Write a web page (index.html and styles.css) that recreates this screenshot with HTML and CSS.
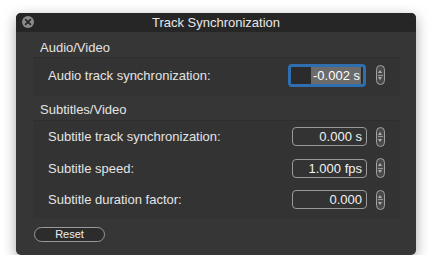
FILE: index.html
```html
<!DOCTYPE html>
<html lang="en">
<head>
  <meta charset="UTF-8" />
  <title>Track Synchronization</title>
  <link rel="stylesheet" href="styles.css">
</head>
<body>
  <div class="window">
    <div class="titlebar">
      <span class="close">
        <svg width="12" height="12" viewBox="0 0 12 12">
          <circle cx="6" cy="6" r="6" fill="#8a8a8a"/>
          <path d="M3.6 3.6 L8.4 8.4 M8.4 3.6 L3.6 8.4" stroke="#2a2a2a" stroke-width="1.8" stroke-linecap="round"/>
        </svg>
      </span>
      <span class="title">Track Synchronization</span>
    </div>
    <div class="content">
      <div class="section-title">Audio/Video</div>
      <div class="group group-audio">
        <div class="row">
          <span class="label">Audio track synchronization:</span>
          <div class="field focused"><span class="sel">-0.002 s</span></div>
          <span class="stepper"></span>
        </div>
      </div>
      <div class="section-title">Subtitles/Video</div>
      <div class="group">
        <div class="row">
          <span class="label">Subtitle track synchronization:</span>
          <div class="field">0.000 s</div>
          <span class="stepper"></span>
        </div>
        <div class="row">
          <span class="label">Subtitle speed:</span>
          <div class="field">1.000 fps</div>
          <span class="stepper"></span>
        </div>
        <div class="row">
          <span class="label">Subtitle duration factor:</span>
          <div class="field">0.000</div>
          <span class="stepper"></span>
        </div>
      </div>
      <button class="reset">Reset</button>
    </div>
  </div>
</body>
</html>
```

FILE: styles.css
```css
* {
  box-sizing: border-box;
  font-family: "Liberation Sans", Arial, sans-serif;
}
body {
  margin: 0;
  padding: 13px 0 0 16px;
  background: #fff;
}
.window {
  width: 400px;
  height: 242px;
  background: #363636;
  border-radius: 5px;
  box-shadow: 0 4px 14px rgba(0,0,0,0.35);
  overflow: hidden;
  color: #e4e4e4;
}
.titlebar {
  height: 19px;
  background: #262626;
  display: flex;
  align-items: center;
  justify-content: center;
  position: relative;
  font-size: 13px;
  color: #e8e8e8;
}
.close {
  position: absolute;
  left: 6px;
  top: 3px;
  height: 12px;
}
.close svg { display: block; }
.content {
  padding: 7px 16px 0 17px;
  font-size: 13px;
}
.section-title {
  padding-left: 7px;
  height: 17px;
  line-height: 17px;
}
.group {
  margin: 2px 0 0 0;
  padding: 0 0 3px 0;
  background: #333333;
  border-top: 1px solid #2e2e2e;
  border-radius: 3px;
}
.group-audio {
  margin-top: 1px;
  padding: 0 0 4px 0;
  margin-bottom: 5px;
}
.row {
  display: flex;
  align-items: center;
  height: 31.5px;
  padding-left: 15px;
}
.group-audio .row { height: 34px; }
.label { flex: 1; }
.field {
  width: 75px;
  height: 19px;
  border: 1px solid #9a9a9a;
  border-radius: 4px;
  text-align: right;
  padding: 0 4px;
  line-height: 17px;
  color: #f2f2f2;
  margin-right: 2px;
}
.field.focused {
  width: 78px;
  height: 23px;
  border: 3px solid #2f6fb0;
  border-radius: 4px;
  background: #2b2b2b;
  padding: 0 2px;
  line-height: 17px;
  margin-right: 3px;
}
.sel {
  background: #6b6b6b;
  color: #fff;
  display: inline-block;
  padding: 0 1px 0 2px;
}
.stepper {
  width: 9px;
  height: 20px;
  margin: 0 15px 0 7px;
  border: 1px solid #a0a0a0;
  border-radius: 5px;
  position: relative;
  background:
    linear-gradient(#9a9a9a, #9a9a9a) center 50% / 5px 1px no-repeat,
    #4a4a4a;
}
.stepper::before, .stepper::after {
  content: "";
  position: absolute;
  left: 1px;
  border-left: 2.5px solid transparent;
  border-right: 2.5px solid transparent;
}
.stepper::before { top: 4px; border-bottom: 3px solid #b0b0b0; }
.stepper::after { bottom: 4px; border-top: 3px solid #b0b0b0; }
.reset {
  margin: 8px 0 0 1px;
  width: 71px;
  height: 15px;
  border: 1px solid #9a9a9a;
  border-radius: 8px;
  background: #2c2c2c;
  color: #f0f0f0;
  font-size: 11px;
  padding: 0;
  line-height: 13px;
}
```
